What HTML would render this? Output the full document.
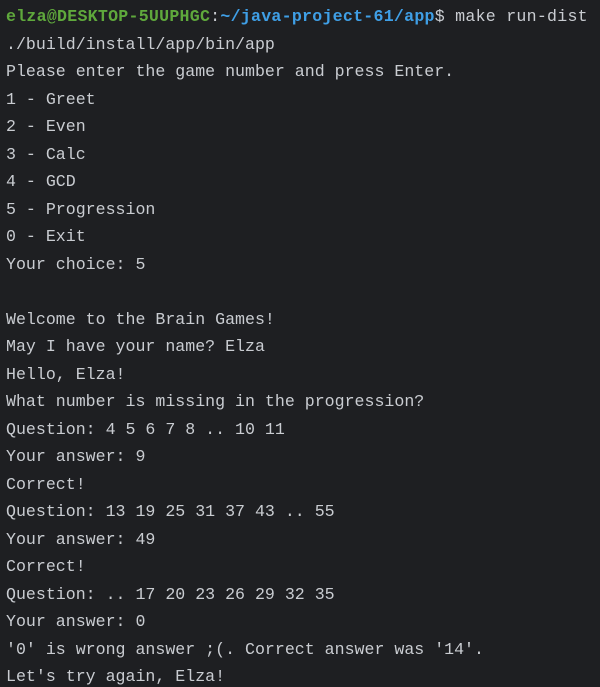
<!DOCTYPE html>
<html><head><style>
html,body{margin:0;padding:0;background:#1e1f22;width:600px;height:687px;overflow:hidden}
pre{margin:0;padding:3px 0 0 6px;font-family:"Liberation Mono",monospace;font-size:16.6px;line-height:27.5px;color:#c9ccd1}
.f{letter-spacing:0.25px}
.g{color:#5fa83c;font-weight:bold}.b{color:#3f9fe6;font-weight:bold}
</style></head><body><pre><span class="f"><span class="g">elza@DESKTOP-5UUPHGC</span>:<span class="b">~/java-project-61/app</span>$ make run-dist</span>
./build/install/app/bin/app
Please enter the game number and press Enter.
1 - Greet
2 - Even
3 - Calc
4 - GCD
5 - Progression
0 - Exit
Your choice: 5

Welcome to the Brain Games!
May I have your name? Elza
Hello, Elza!
What number is missing in the progression?
Question: 4 5 6 7 8 .. 10 11
Your answer: 9
Correct!
Question: 13 19 25 31 37 43 .. 55
Your answer: 49
Correct!
Question: .. 17 20 23 26 29 32 35
Your answer: 0
'0' is wrong answer ;(. Correct answer was '14'.
Let's try again, Elza!</pre></body></html>
